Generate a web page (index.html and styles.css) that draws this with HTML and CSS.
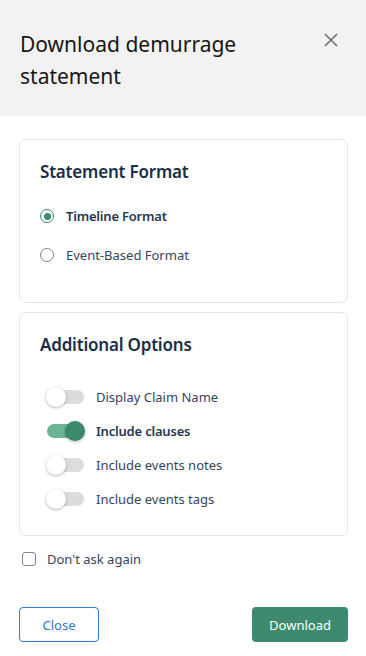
FILE: index.html
```html
<!DOCTYPE html>
<html>
<head>
<meta charset="utf-8">
<link rel="stylesheet" href="styles.css">
</head>
<body>
<div class="modal">
  <header class="head">
    <h1 class="title">Download demurrage statement</h1>
    <button class="close-x" aria-label="Close">
      <svg width="14" height="14" viewBox="0 0 14 14"><path d="M1 1L13 13M13 1L1 13" stroke="#6f6f6f" stroke-width="1.6" fill="none"/></svg>
    </button>
  </header>
  <main class="content">
    <section class="card card-format">
      <h2 class="card-title">Statement Format</h2>
      <div class="options">
        <label class="radio-row checked"><span class="radio"><span class="dot"></span></span><span class="lbl strong">Timeline Format</span></label>
        <label class="radio-row"><span class="radio"></span><span class="lbl">Event-Based Format</span></label>
      </div>
    </section>
    <section class="card card-options">
      <h2 class="card-title">Additional Options</h2>
      <div class="toggles">
        <div class="toggle-row"><span class="toggle"><span class="thumb"></span></span><span class="lbl">Display Claim Name</span></div>
        <div class="toggle-row"><span class="toggle on"><span class="thumb"></span></span><span class="lbl strong">Include clauses</span></div>
        <div class="toggle-row"><span class="toggle"><span class="thumb"></span></span><span class="lbl">Include events notes</span></div>
        <div class="toggle-row"><span class="toggle"><span class="thumb"></span></span><span class="lbl">Include events tags</span></div>
      </div>
    </section>
    <label class="ask"><span class="checkbox"></span><span class="lbl">Don't ask again</span></label>
  </main>
  <footer class="actions">
    <button class="btn btn-close">Close</button>
    <button class="btn btn-download">Download</button>
  </footer>
</div>
</body>
</html>
```
FILE: styles.css
```css
* { box-sizing: border-box; }
html, body { margin: 0; padding: 0; background: #fff; }
body { font-family: "Noto Sans", "Open Sans", sans-serif; color: #2d3e55; width: 366px; height: 656px; overflow: hidden; }
.modal { display: flex; flex-direction: column; height: 656px; }
.head { background: #f2f2f2; height: 116px; display: flex; justify-content: space-between; align-items: flex-start; padding: 28px 20px 0 20px; }
.title { margin: 0; font-size: 21px; font-weight: 400; line-height: 32px; color: #161616; width: 270px; }
.close-x { border: 0; background: none; padding: 0; margin: 5px 8px 0 0; width: 14px; height: 14px; display: flex; }
.content { padding: 23px 18px 0 19px; display: flex; flex-direction: column; gap: 9px; }
.card { border: 1px solid #e1e5eb; border-radius: 7px; padding: 20px 20px 0 20px; }
.card-format { height: 164px; }
.card-options { height: 224px; }
.card-title { margin: 0; font-size: 17px; font-weight: 600; line-height: 24px; color: #1b2e48; letter-spacing: -0.2px; }
.options { display: flex; flex-direction: column; gap: 19px; margin-top: 22px; }
.radio-row { display: flex; align-items: center; gap: 12px; height: 20px; }
.radio { width: 14px; height: 14px; border-radius: 50%; border: 1.5px solid #7a889b; display: flex; align-items: center; justify-content: center; }
.radio-row.checked .radio { border-color: #3b8a6b; }
.dot { width: 7px; height: 7px; border-radius: 50%; background: #3b8a6b; }
.lbl { font-size: 13px; color: #34465e; line-height: 18px; }
.lbl.strong { font-weight: 600; color: #26384f; letter-spacing: -0.2px; }
.toggles { display: flex; flex-direction: column; gap: 14px; margin-top: 30px; margin-left: 7px; }
.toggle-row { display: flex; align-items: center; gap: 12px; height: 20px; }
.toggle { position: relative; width: 37px; height: 14px; border-radius: 7px; background: #dcdcdc; flex: none; }
.toggle .thumb { position: absolute; top: -3px; left: -1px; width: 20px; height: 20px; border-radius: 50%; background: #fff; box-shadow: 0 1px 3px rgba(0,0,0,0.3); }
.toggle.on { background: #6bb595; }
.toggle.on .thumb { left: auto; right: -1px; background: #3b8a6b; }
.ask { display: flex; align-items: center; gap: 11px; margin-top: 4px; padding-left: 3px; height: 20px; }
.checkbox { width: 14px; height: 14px; border: 1.5px solid #7a869a; border-radius: 3px; }
.actions { margin-top: auto; display: flex; justify-content: space-between; padding: 0 18px 14px 19px; }
.btn { font-family: "Noto Sans", "Open Sans", sans-serif; font-size: 13px; height: 35px; border-radius: 4px; cursor: pointer; }
.btn-close { width: 80px; background: #fff; border: 1px solid #2f7ad6; color: #2f7ad6; }
.btn-download { width: 96px; background: #3d8a6e; border: 0; color: #fff; }
```
